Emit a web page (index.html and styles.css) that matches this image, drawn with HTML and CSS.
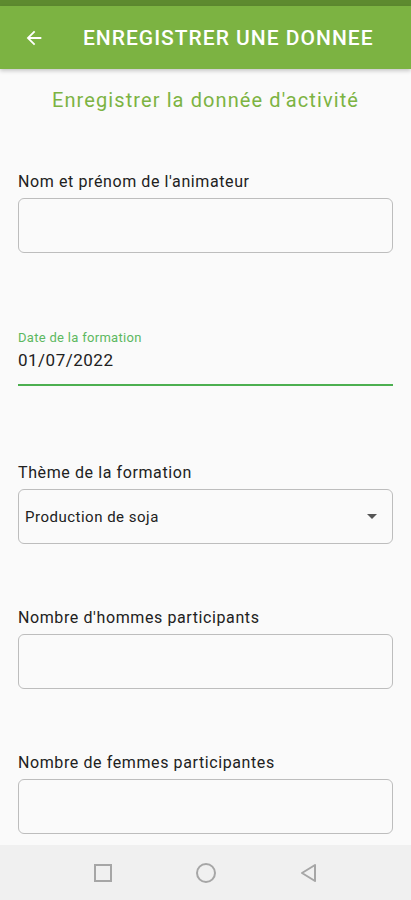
FILE: index.html
```html
<!DOCTYPE html>
<html lang="fr">
  <head>
    <meta charset="UTF-8" />
    <meta name="viewport" content="width=device-width, initial-scale=1.0" />
    <title>Enregistrer une donnee</title>
    <link rel="stylesheet" href="styles.css">
  </head>
  <body>
    <div class="status-bar"></div>

    <header class="app-bar">
      <svg class="back-icon" width="22" height="22" viewBox="0 0 24 24">
        <path d="M20 11H7.83l5.59-5.59L12 4l-8 8 8 8 1.41-1.41L7.83 13H20v-2z" fill="#ffffff" />
      </svg>
      <h1>ENREGISTRER UNE DONNEE</h1>
    </header>

    <main class="content">
      <h2 class="page-title">Enregistrer la donnée d'activité</h2>

      <div class="field">
        <label>Nom et prénom de l'animateur</label>
        <div class="box"></div>
      </div>

      <div class="field date-field">
        <span class="float-label">Date de la formation</span>
        <span class="date-value">01/07/2022</span>
      </div>

      <div class="field">
        <label>Thème de la formation</label>
        <div class="box select">
          <span>Production de soja</span>
          <span class="caret"></span>
        </div>
      </div>

      <div class="field">
        <label>Nombre d'hommes participants</label>
        <div class="box"></div>
      </div>

      <div class="field">
        <label>Nombre de femmes participantes</label>
        <div class="box"></div>
      </div>
    </main>

    <!-- system navigation -->
    <nav class="nav-bar">
      <svg width="22" height="22" viewBox="0 0 22 22">
        <rect x="3" y="3" width="16" height="16" fill="none" stroke="#a6a6a6" stroke-width="2" />
      </svg>
      <svg width="24" height="24" viewBox="0 0 24 24">
        <circle cx="12" cy="12" r="9" fill="none" stroke="#a6a6a6" stroke-width="2" />
      </svg>
      <svg width="22" height="22" viewBox="0 0 22 22">
        <path d="M17 3 L4 11 L17 19 Z" fill="none" stroke="#a6a6a6" stroke-width="2" stroke-linejoin="round" />
      </svg>
    </nav>
  </body>
</html>
```

FILE: styles.css
```css
body {
  margin: 0;
  font-family: Roboto, "Liberation Sans", sans-serif;
  background-color: #fafafa;
  color: #212121;
  display: flex;
  flex-direction: column;
  height: 900px;
  overflow: hidden;
}

.status-bar {
  height: 6px;
  background-color: #5d8a2f;
}

.app-bar {
  height: 63px;
  background-color: #7cb342;
  display: flex;
  align-items: center;
  padding: 0 0 0 23px;
  box-shadow: 0 2px 4px rgba(0, 0, 0, 0.2);
  position: relative;
  z-index: 1;
}

.back-icon {
  flex-shrink: 0;
}

.app-bar h1 {
  margin: 0 0 0 38px;
  font-size: 21px;
  font-weight: 500;
  color: #ffffff;
  letter-spacing: 1px;
}

.content {
  flex: 1;
  overflow: hidden;
  padding: 0 18px;
}

.page-title {
  margin: 19px 0 0;
  text-align: center;
  font-size: 20px;
  font-weight: 400;
  line-height: 24px;
  letter-spacing: 1.1px;
  color: #7cb342;
}

.field {
  display: flex;
  flex-direction: column;
  margin-top: 64px;
}

.field:nth-of-type(1) {
  margin-top: 60px;
}

.field label {
  font-size: 16px;
  line-height: 20px;
  letter-spacing: 0.6px;
  color: #212121;
  margin-bottom: 6px;
}

.box {
  height: 53px;
  border: 1px solid #bdbdbd;
  border-radius: 6px;
  background-color: #fafafa;
}

.select {
  display: flex;
  align-items: center;
  justify-content: space-between;
  padding: 0 15px 0 6px;
  font-size: 15px;
  letter-spacing: 0.5px;
  color: #212121;
}

.caret {
  width: 0;
  height: 0;
  border-left: 5px solid transparent;
  border-right: 5px solid transparent;
  border-top: 5px solid #555555;
}

.date-field {
  padding-top: 11px;
  padding-bottom: 13px;
}

.float-label {
  font-size: 13px;
  line-height: 16px;
  letter-spacing: 0.3px;
  color: #5cb860;
  margin-top: 2px;
}

.date-value {
  font-size: 17px;
  line-height: 22px;
  letter-spacing: 0.5px;
  color: #212121;
  padding: 3px 0 13px;
  border-bottom: 2px solid #4caf50;
}

.date-field + .field {
  margin-top: 64px;
}

.nav-bar {
  height: 55px;
  flex-shrink: 0;
  background-color: #f0f0f0;
  display: flex;
  align-items: center;
  justify-content: center;
  gap: 80px;
}
```
